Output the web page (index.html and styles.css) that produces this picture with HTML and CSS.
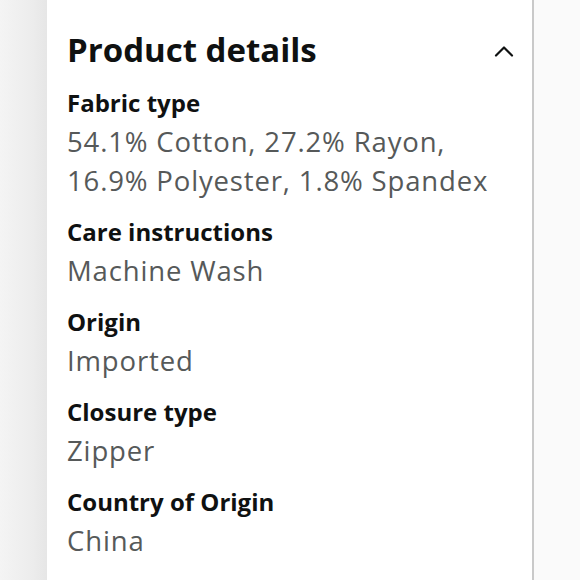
FILE: index.html
```html
<!DOCTYPE html>
<html>
<head>
<meta charset="utf-8">
<link rel="stylesheet" href="styles.css">
</head>
<body>
<div class="page">
  <div class="side-left"></div>
  <section class="card">
    <header class="head">
      <h1 class="title">Product details</h1>
      <svg class="chevron" width="20" height="12" viewBox="0 0 20 12"><path d="M2 10.5 L10 2.5 L18 10.5" fill="none" stroke="#0f1111" stroke-width="2.2" stroke-linecap="round" stroke-linejoin="round"/></svg>
    </header>
    <dl class="details">
      <div class="item"><dt class="label">Fabric type</dt><dd class="value">54.1% Cotton, 27.2% Rayon, 16.9% Polyester, 1.8% Spandex</dd></div>
      <div class="item"><dt class="label">Care instructions</dt><dd class="value">Machine Wash</dd></div>
      <div class="item"><dt class="label">Origin</dt><dd class="value">Imported</dd></div>
      <div class="item"><dt class="label">Closure type</dt><dd class="value">Zipper</dd></div>
      <div class="item"><dt class="label">Country of Origin</dt><dd class="value">China</dd></div>
    </dl>
  </section>
  <div class="side-right"></div>
</div>
</body>
</html>
```
FILE: styles.css
```css
html, body {
  margin: 0;
  padding: 0;
  background: #fbfbfb;
}
.page {
  display: flex;
  width: 580px;
  height: 580px;
  overflow: hidden;
  font-family: "Open Sans", "Noto Sans", sans-serif;
}
.side-left {
  width: 47px;
  flex: none;
  background: linear-gradient(to right, #f4f4f4 0%, #ececec 70%, #e6e6e6 100%);
}
.card {
  width: 465px;
  flex: none;
  background: #ffffff;
  padding: 0 0 0 20px;
  border-right: 2px solid #c9c9c9;
}
.side-right {
  flex: 1;
  background: #fafafa;
}
.head {
  display: flex;
  align-items: center;
  justify-content: space-between;
  padding-top: 28px;
  padding-right: 18px;
}
.title {
  margin: 0;
  font-size: 33px;
  line-height: 44px;
  font-weight: 700;
  color: #0f1111;
}
.chevron {
  display: block;
  margin-top: 2px;
}
.details {
  margin: 11px 0 0 0;
  padding: 0;
}
.item {
  display: flex;
  flex-direction: column;
  margin-bottom: 12px;
}
.label {
  font-size: 24px;
  line-height: 39px;
  font-weight: 700;
  color: #0f1111;
}
.value {
  margin: 0;
  font-size: 27.5px;
  line-height: 39px;
  letter-spacing: 0.85px;
  color: #565959;
  padding-right: 10px;
}
```
